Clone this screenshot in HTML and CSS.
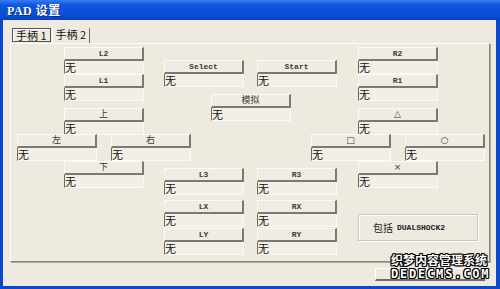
FILE: index.html
```html
<!DOCTYPE html>
<html lang="zh-cn">
<head>
    <meta charset="UTF-8">
    <title>PAD 设置</title>
    <link rel="stylesheet" href="styles.css">
</head>
<body>
    <div class="window">
        <div class="titlebar"><span class="title">PAD 设置</span></div>

        <div class="client">
            <div class="tabs">
                <span class="tab active">手柄 1</span>
                <span class="tab">手柄 2</span>
            </div>

            <div class="panel">
                <div class="pad-grid">
                    <div class="ctl k-l2"><div class="ctl-btn">L2</div><div class="ctl-val">无</div></div>
                    <div class="ctl k-r2"><div class="ctl-btn">R2</div><div class="ctl-val">无</div></div>
                    <div class="ctl k-select"><div class="ctl-btn">Select</div><div class="ctl-val">无</div></div>
                    <div class="ctl k-start"><div class="ctl-btn">Start</div><div class="ctl-val">无</div></div>
                    <div class="ctl k-l1"><div class="ctl-btn">L1</div><div class="ctl-val">无</div></div>
                    <div class="ctl k-r1"><div class="ctl-btn">R1</div><div class="ctl-val">无</div></div>
                    <div class="ctl k-analog"><div class="ctl-btn cjk">模拟</div><div class="ctl-val">无</div></div>
                    <div class="ctl k-up"><div class="ctl-btn cjk">上</div><div class="ctl-val">无</div></div>
                    <div class="ctl k-tri"><div class="ctl-btn sym">△</div><div class="ctl-val">无</div></div>
                    <div class="ctl k-left"><div class="ctl-btn cjk">左</div><div class="ctl-val">无</div></div>
                    <div class="ctl k-right"><div class="ctl-btn cjk">右</div><div class="ctl-val">无</div></div>
                    <div class="ctl k-sq"><div class="ctl-btn sym">□</div><div class="ctl-val">无</div></div>
                    <div class="ctl k-ci"><div class="ctl-btn sym">○</div><div class="ctl-val">无</div></div>
                    <div class="ctl k-down"><div class="ctl-btn cjk">下</div><div class="ctl-val">无</div></div>
                    <div class="ctl k-x"><div class="ctl-btn sym">×</div><div class="ctl-val">无</div></div>
                    <div class="ctl k-l3"><div class="ctl-btn">L3</div><div class="ctl-val">无</div></div>
                    <div class="ctl k-r3"><div class="ctl-btn">R3</div><div class="ctl-val">无</div></div>
                    <div class="ctl k-lx"><div class="ctl-btn">LX</div><div class="ctl-val">无</div></div>
                    <div class="ctl k-rx"><div class="ctl-btn">RX</div><div class="ctl-val">无</div></div>
                    <div class="ctl k-ly"><div class="ctl-btn">LY</div><div class="ctl-val">无</div></div>
                    <div class="ctl k-ry"><div class="ctl-btn">RY</div><div class="ctl-val">无</div></div>

                    <div class="groupbox"><span class="cjk-txt">包括</span> <span class="mono-txt">DUALSHOCK2</span></div>
                </div>
            </div>

            <div class="footer">
                <div class="ok-btn"></div>
            </div>
        </div>

        <!-- watermark over the corner -->
        <div class="watermark">
            <div class="wm-cn">织梦内容管理系统</div>
            <div class="wm-en">DEDECMS.COM</div>
        </div>
    </div>
</body>
</html>
```

FILE: styles.css
```css
* {
    margin: 0;
    padding: 0;
    box-sizing: border-box;
}

body {
    background: #0a46d0;
    font-family: "Noto Sans CJK SC", sans-serif;
}

/* window frame */
.window {
    position: relative;
    width: 500px;
    height: 289px;
    background: #0b48d2;
    padding: 0 4px 3px 3px;
    display: flex;
    flex-direction: column;
}

.titlebar {
    height: 20px;
    margin: 0 -4px 0 -3px;
    padding-left: 7px;
    display: flex;
    align-items: center;
    background: linear-gradient(#3a7cf2, #0d56e0 25%, #0a4fd8 70%, #0842c4);
}

.title {
    color: #fff;
    font-family: "Liberation Serif", "Noto Sans CJK SC", serif;
    font-weight: bold;
    font-size: 12px;
    letter-spacing: 0.5px;
    text-shadow: 1px 1px 0 #0a2a88;
}

.client {
    flex: 1;
    background: #eeeadf;
    padding: 8px 0 0 7px;
}

/* tabs */
.tabs {
    display: flex;
    margin-left: 2px;
    height: 15px;
}

.tab {
    font-size: 11px;
    line-height: 13px;
    padding: 0 3px;
    color: #111;
    border-left: 1px solid #fff;
    border-right: 1px solid #716f64;
    margin-right: 1px;
}

.tab.active {
    border: 1px solid #555;
    box-shadow: inset 1px 1px 0 #fff;
    height: 14px;
}

.panel {
    width: 480px;
    height: 219px;
    border: 1px solid;
    border-color: #fff #8c8979 #8c8979 #fff;
    box-shadow: 1px 1px 0 #aca899;
    padding: 3px 0 0 6px;
}

/* button layout */
.pad-grid {
    display: grid;
    grid-template-columns: 47px 47px 53px 47px 46px 54px 47px 47px 80px;
    grid-template-rows: 13px 14px 20px 14px 26px 27px 7px 32px 14px 14px 27px;
}

.ctl {
    width: 80px;
    align-self: start;
    justify-self: start;
}

.ctl-btn {
    height: 14px;
    border-top: 1px solid #fbfaf6;
    border-left: 1px solid #fbfaf6;
    border-right: 2px solid #7d796c;
    border-bottom: 2px solid #7d796c;
    background: #efece3;
    text-align: center;
    font-family: "Liberation Mono", monospace;
    font-weight: bold;
    font-size: 8px;
    line-height: 11px;
    color: #3a3a3a;
}

.ctl-btn.cjk {
    font-family: "Noto Sans CJK SC", sans-serif;
    font-weight: normal;
    font-size: 9px;
    line-height: 10px;
}

.ctl-btn.sym {
    font-family: "DejaVu Sans", sans-serif;
    font-weight: normal;
    font-size: 9px;
}

.ctl-val {
    height: 13px;
    border-left: 1px solid #6e6b60;
    border-right: 1px solid #fbfaf6;
    border-bottom: 1px solid #fbfaf6;
    background: #f1efe7;
    font-size: 11px;
    line-height: 12px;
    color: #111;
}

.k-l2 { grid-area: 1 / 2; }
.k-r2 { grid-area: 1 / 8; }
.k-select { grid-area: 2 / 4; }
.k-start { grid-area: 2 / 6; }
.k-l1 { grid-area: 3 / 2; }
.k-r1 { grid-area: 3 / 8; }
.k-analog { grid-area: 4 / 5; }
.k-up { grid-area: 5 / 2; }
.k-tri { grid-area: 5 / 8; }
.k-left { grid-area: 6 / 1; }
.k-right { grid-area: 6 / 3; }
.k-sq { grid-area: 6 / 7; }
.k-ci { grid-area: 6 / 9; }
.k-down { grid-area: 7 / 2; }
.k-x { grid-area: 7 / 8; }
.k-l3 { grid-area: 8 / 4; }
.k-r3 { grid-area: 8 / 6; }
.k-lx { grid-area: 9 / 4; }
.k-rx { grid-area: 9 / 6; }
.k-ly { grid-area: 11 / 4; }
.k-ry { grid-area: 11 / 6; }

.groupbox {
    grid-area: 10 / 8;
    align-self: start;
    justify-self: start;
    width: 120px;
    height: 27px;
    border: 1px solid #cbc7b8;
    box-shadow: inset 1px 1px 0 #fff, 1px 1px 0 #fff;
    display: flex;
    align-items: center;
    padding-left: 14px;
    color: #222;
}

.cjk-txt {
    font-size: 10px;
    margin-right: 4px;
}

.mono-txt {
    font-family: "Liberation Mono", monospace;
    font-weight: bold;
    font-size: 8px;
}

/* bottom strip */
.footer {
    display: flex;
    justify-content: flex-end;
    padding: 6px 11px 0 0;
}

.ok-btn {
    width: 110px;
    height: 13px;
    border-top: 1px solid #fff;
    border-left: 1px solid #fff;
    border-right: 2px solid #6e6b60;
    border-bottom: 2px solid #6e6b60;
}

.watermark {
    position: absolute;
    left: 391px;
    top: 253px;
    color: #fff;
    font-weight: bold;
    text-shadow: 1px 0 0 #000, -1px 0 0 #000, 0 1px 0 #000, 0 -1px 0 #000, 1px 1px 0 #000, -1px -1px 0 #000, 1px -1px 0 #000, -1px 1px 0 #000;
}

.wm-cn {
    font-size: 12px;
    line-height: 14px;
}

.wm-en {
    font-family: "DejaVu Sans Mono", monospace;
    font-size: 12px;
    line-height: 15px;
    letter-spacing: 1.8px;
}
```
